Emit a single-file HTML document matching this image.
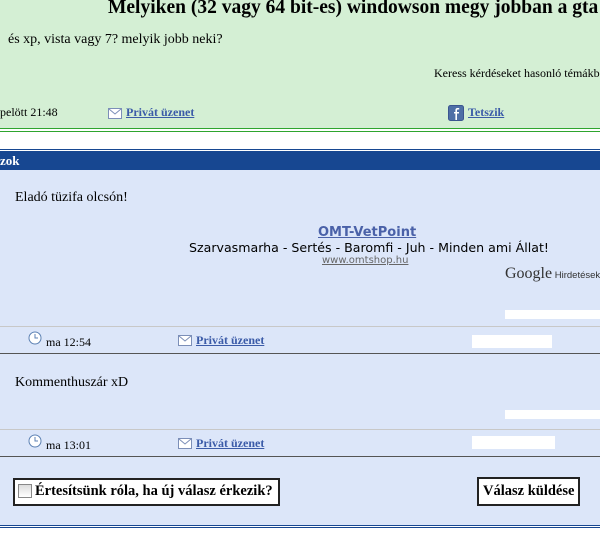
<!DOCTYPE html>
<html><head><meta charset="utf-8"><style>
*{margin:0;padding:0}
body{width:600px;height:548px;position:relative;overflow:hidden;background:#fff;font-family:"Liberation Serif",serif;font-size:12px;color:#000}
.a{position:absolute;white-space:nowrap}
a{color:#3b5ba8;font-weight:bold;text-decoration:underline}
.ln{position:absolute;left:0;width:600px}
</style></head><body>
<div class="ln" style="top:0;height:128px;background:#d4efd4"></div>
<div class="ln" style="top:128px;height:1px;background:#2ea52e"></div>
<div class="ln" style="top:131px;height:1px;background:#2ea52e"></div>
<div class="a" style="left:108px;top:-3px;font-size:19.5px;font-weight:bold">Melyiken (32 vagy 64 bit-es) windowson megy jobban a gta</div>
<div class="a" style="left:8px;top:32px;font-size:14px">és xp, vista vagy 7? melyik jobb neki?</div>
<div class="a" style="left:434px;top:66px">Keress kérdéseket hasonló témákban</div>
<div class="a" style="left:0;top:105px">pelött 21:48</div>
<svg class="a" style="left:108px;top:108px" width="14" height="11"><rect x="0.5" y="0.5" width="13" height="10" fill="#fff" stroke="#7c8fb8"/><path d="M1 1 L7 6 L13 1" fill="none" stroke="#7c8fb8"/></svg>
<div class="a" style="left:126px;top:105px"><a>Privát üzenet</a></div>
<svg class="a" style="left:448px;top:105px" width="16" height="16"><rect x="0.5" y="0.5" width="15" height="15" rx="2" fill="#4e6fa6" stroke="#3b5590"/><path d="M9 15V8.5H11V7H9V5.5C9 4.8 9.4 4.5 10 4.5H11.2V3H9.6C8 3 7.4 4 7.4 5.3V7H6V8.5H7.4V15Z" fill="#fff"/></svg>
<div class="a" style="left:468px;top:105px"><a>Tetszik</a></div>
<div class="ln" style="top:149px;height:1px;background:#174791"></div>
<div class="ln" style="top:151px;height:19px;background:#174791"></div>
<div class="a" style="left:0;top:153px;color:#fff;font-weight:bold;font-size:13px">zok</div>
<div class="ln" style="top:170px;height:355px;background:#dce6f9"></div>
<div class="ln" style="top:525px;height:1px;background:#174791"></div>
<div class="ln" style="top:527px;height:1px;background:#174791"></div>
<div class="a" style="left:15px;top:190px;font-size:14px">Eladó tüzifa olcsón!</div>
<div class="a" style="left:318px;top:225px;font-family:'DejaVu Sans',sans-serif;font-size:13px"><a style="color:#4a61a8">OMT-VetPoint</a></div>
<div class="a" style="left:189px;top:240px;font-family:'DejaVu Sans',sans-serif;font-size:12.6px">Szarvasmarha - Sertés - Baromfi - Juh - Minden ami Állat!</div>
<div class="a" style="left:322px;top:255px;font-family:'DejaVu Sans',sans-serif;font-size:10px;color:#666;text-decoration:underline">www.omtshop.hu</div>
<div class="a" style="left:505px;top:265px;font-size:16px;font-family:'Liberation Serif',serif;color:#333">Google<span style="font-family:'Liberation Sans',sans-serif;font-size:9.5px"> Hirdetések</span></div>
<div class="a" style="left:505px;top:310px;width:95px;height:9px;background:#fff"></div>
<div class="ln" style="top:326px;height:1px;background:#c8c8c8"></div>
<div class="ln" style="top:353px;height:1px;background:#555"></div>
<svg class="a" style="left:28px;top:331px" width="14" height="14"><circle cx="7" cy="7" r="6" fill="#fff" stroke="#5d82b4"/><path d="M7 3V7H10" fill="none" stroke="#5d82b4"/></svg>
<div class="a" style="left:46px;top:335px">ma 12:54</div>
<svg class="a" style="left:178px;top:335px" width="14" height="11"><rect x="0.5" y="0.5" width="13" height="10" fill="#fff" stroke="#7c8fb8"/><path d="M1 1 L7 6 L13 1" fill="none" stroke="#7c8fb8"/></svg>
<div class="a" style="left:196px;top:333px"><a>Privát üzenet</a></div>
<div class="a" style="left:472px;top:335px;width:80px;height:13px;background:#fff"></div>
<div class="a" style="left:15px;top:375px;font-size:14px">Kommenthuszár xD</div>
<div class="a" style="left:505px;top:410px;width:95px;height:9px;background:#fff"></div>
<div class="ln" style="top:429px;height:1px;background:#c8c8c8"></div>
<div class="ln" style="top:456px;height:1px;background:#555"></div>
<svg class="a" style="left:28px;top:434px" width="14" height="14"><circle cx="7" cy="7" r="6" fill="#fff" stroke="#5d82b4"/><path d="M7 3V7H10" fill="none" stroke="#5d82b4"/></svg>
<div class="a" style="left:46px;top:438px">ma 13:01</div>
<svg class="a" style="left:178px;top:438px" width="14" height="11"><rect x="0.5" y="0.5" width="13" height="10" fill="#fff" stroke="#7c8fb8"/><path d="M1 1 L7 6 L13 1" fill="none" stroke="#7c8fb8"/></svg>
<div class="a" style="left:196px;top:436px"><a>Privát üzenet</a></div>
<div class="a" style="left:472px;top:436px;width:83px;height:13px;background:#fff"></div>
<div class="a" style="left:13px;top:478px;width:263px;height:24px;border:2px solid #222;background:#fff"></div>
<div class="a" style="left:18px;top:484px;width:12px;height:12px;border:1px solid #888;background:linear-gradient(#ddd,#fff)"></div>
<div class="a" style="left:35px;top:483px;font-size:14.5px;font-weight:bold">Értesítsünk róla, ha új válasz érkezik?</div>
<div class="a" style="left:477px;top:477px;width:99px;height:25px;border:2px solid #222;background:#fff"></div>
<div class="a" style="left:483px;top:483px;font-size:14.5px;font-weight:bold">Válasz küldése</div>
</body></html>
